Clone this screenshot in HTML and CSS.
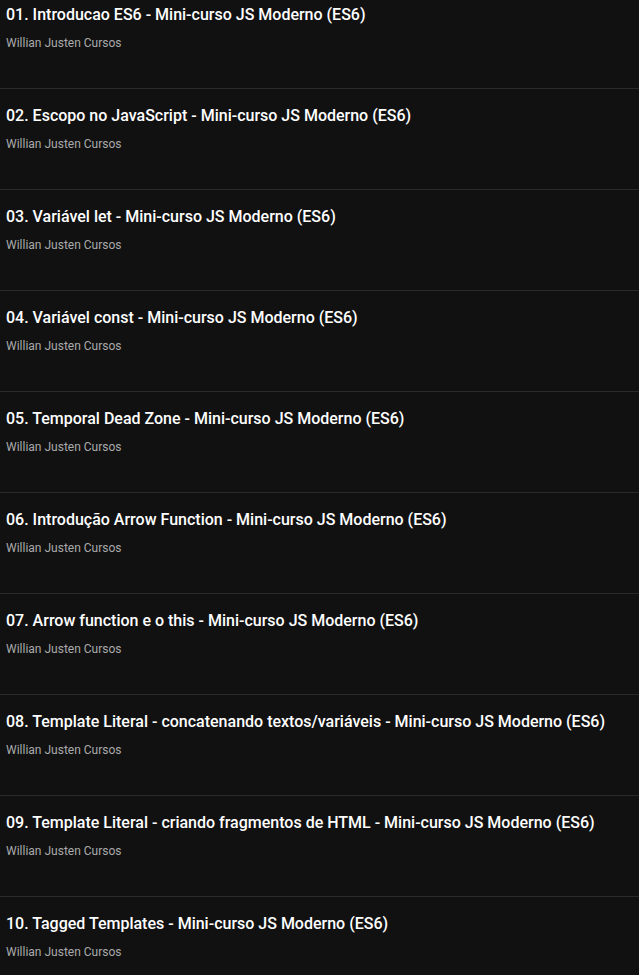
FILE: index.html
```html
<!DOCTYPE html>
<html lang="pt">
<head>
<meta charset="utf-8">
<title>Mini-curso JS Moderno (ES6)</title>
<link rel="stylesheet" href="styles.css">
</head>
<body>
<ul class="list">
  <li class="item"><h3 class="title">01. Introducao ES6 - Mini-curso JS Moderno (ES6)</h3><p class="channel">Willian Justen Cursos</p></li>
  <li class="item"><h3 class="title">02. Escopo no JavaScript - Mini-curso JS Moderno (ES6)</h3><p class="channel">Willian Justen Cursos</p></li>
  <li class="item"><h3 class="title">03. Variável let - Mini-curso JS Moderno (ES6)</h3><p class="channel">Willian Justen Cursos</p></li>
  <li class="item"><h3 class="title">04. Variável const - Mini-curso JS Moderno (ES6)</h3><p class="channel">Willian Justen Cursos</p></li>
  <li class="item"><h3 class="title">05. Temporal Dead Zone - Mini-curso JS Moderno (ES6)</h3><p class="channel">Willian Justen Cursos</p></li>
  <li class="item"><h3 class="title">06. Introdução Arrow Function - Mini-curso JS Moderno (ES6)</h3><p class="channel">Willian Justen Cursos</p></li>
  <li class="item"><h3 class="title">07. Arrow function e o this - Mini-curso JS Moderno (ES6)</h3><p class="channel">Willian Justen Cursos</p></li>
  <li class="item"><h3 class="title">08. Template Literal - concatenando textos/variáveis - Mini-curso JS Moderno (ES6)</h3><p class="channel">Willian Justen Cursos</p></li>
  <li class="item"><h3 class="title">09. Template Literal - criando fragmentos de HTML - Mini-curso JS Moderno (ES6)</h3><p class="channel">Willian Justen Cursos</p></li>
  <li class="item"><h3 class="title">10. Tagged Templates - Mini-curso JS Moderno (ES6)</h3><p class="channel">Willian Justen Cursos</p></li>
</ul>
</body>
</html>
```
FILE: styles.css
```css
html, body {
  margin: 0;
  padding: 0;
  background: #111112;
  font-family: Roboto, "Noto Sans", sans-serif;
}
body {
  overflow: hidden;
  height: 975px;
}
.list {
  list-style: none;
  margin: -12px 0 0 0;
  padding: 0;
}
.item {
  padding: 16px 6px 36px;
  border-bottom: 1px solid #2a2a2b;
}
.title {
  margin: 0;
  font-size: 16px;
  line-height: 22px;
  font-weight: 500;
  color: #ffffff;
  white-space: nowrap;
}
.channel {
  margin: 8px 0 0;
  font-size: 12px;
  line-height: 18px;
  color: #aaaaaa;
}
```
